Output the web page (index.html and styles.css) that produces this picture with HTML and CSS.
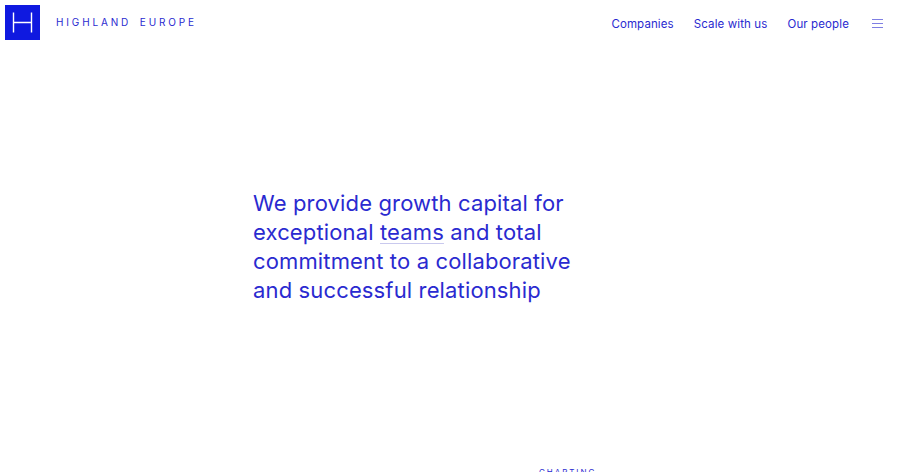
FILE: index.html
```html
<!DOCTYPE html>
<html>
<head>
<title>Highland Europe</title>
<link rel="stylesheet" href="styles.css">
</head>
<body>
<header class="top">
	<a class="brand" href="#">
		<span class="logo">
			<svg width="35" height="35" viewBox="0 0 35 35">
				<path d="M8.5 7.5V27.5M26.5 7.5V27.5M8.5 17.5H26.5" fill="none" stroke="#fff" stroke-width="1.4"/>
			</svg>
		</span>
		<span class="brand-name">HIGHLAND EUROPE</span>
	</a>
	<nav class="menu">
		<a href="#">Companies</a>
		<a href="#">Scale with us</a>
		<a href="#">Our people</a>
		<svg class="burger" width="11" height="9" viewBox="0 0 11 9">
			<path d="M0 .5H11M0 4.5H11M0 8.5H11" fill="none" stroke="#2a2ad0" stroke-width="1" opacity=".6"/>
		</svg>
	</nav>
</header>

<section class="hero">
	<h1>We provide growth capital for<br>exceptional <span class="line">teams</span> and total<br>commitment to a collaborative<br>and successful relationship</h1>
</section>

<p class="next">CHARTING</p>
</body>
</html>
```

FILE: styles.css
```css
html, body {
	height: 472px;
	overflow: hidden;
}
body {
	margin: 0;
	background-color: #fff;
	color: #2a2ad0;
	font-family: Inter, "Liberation Sans", sans-serif;
}
a {
	color: inherit;
	text-decoration: none;
}

.top {
	display: flex;
	justify-content: space-between;
	align-items: flex-start;
	padding: 5px 18px 0 5px;
}
.brand {
	display: flex;
	align-items: center;
	gap: 16px;
}
.logo {
	display: block;
	width: 35px;
	height: 35px;
	background-color: #0f19e0;
}
.logo svg {
	display: block;
}
.brand-name {
	font-size: 10px;
	letter-spacing: 2.85px;
	word-spacing: 3px;
	margin-top: -2px;
}

.menu {
	display: flex;
	align-items: center;
	gap: 20px;
	height: 37px;
	font-size: 11.5px;
	letter-spacing: .12px;
}
.burger {
	margin-left: 3px;
	margin-top: -1px;
}

.hero {
	padding: 147px 0 0 253px;
}
.hero h1 {
	margin: 0;
	font-size: 22px;
	line-height: 29px;
	font-weight: 400;
	letter-spacing: .14px;
}
.line {
	text-decoration: underline;
	text-decoration-thickness: 1px;
	text-underline-offset: 3px;
	text-decoration-color: #c9c9ee;
}

.next {
	margin: 162px 0 0 539px;
	font-size: 8px;
	letter-spacing: 1.95px;
}
```
